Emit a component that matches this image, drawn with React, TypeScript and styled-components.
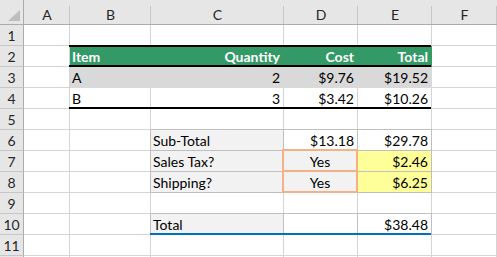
import React from 'react'
import styled, { createGlobalStyle, css } from 'styled-components'

const GlobalStyle = createGlobalStyle`
  *, *::before, *::after {
    box-sizing: border-box;
  }

  html, body {
    margin: 0;
    padding: 0;
    background: #ffffff;
  }
`

// widths include each column's right-hand grid line
const COLUMN_WIDTHS = [24, 46, 81, 133, 74, 74, 65]
const COLUMNS = ['A', 'B', 'C', 'D', 'E', 'F'] as const
const ROW_COUNT = 12
// the last row only peeks in at the bottom edge, so its number isn't drawn
const LABELLED_ROWS = 11

const GRID = '#d4d4d4'
const FRAME = '#bfbfbf'
const HEADER_BG = '#e6e6e6'

type Column = typeof COLUMNS[number]

interface CellSpec {
  text?: string
  fill?: string
  align?: 'left' | 'right' | 'center'
  bold?: boolean
  color?: string
  top?: string
  bottom?: string
  frame?: boolean
  outline?: string
}

const GREEN = '#339966'
const ROW_GRAY = '#d9d9d9'
const LIGHT = '#f2f2f2'
const YELLOW = '#ffff99'
const BLACK = '#000000'
const BLUE = '#0070c0'
const ORANGE = '#f4b183'

const head = (text: string, align: CellSpec['align']): CellSpec => ({
  text, align, bold: true, color: '#ffffff', fill: GREEN, top: BLACK, bottom: BLACK,
})

const cells: Record<number, Partial<Record<Column, CellSpec>>> = {
  2: {
    B: head('Item', 'left'),
    C: head('Quantity', 'right'),
    D: head('Cost', 'right'),
    E: head('Total', 'right'),
  },
  3: {
    B: { text: 'A', fill: ROW_GRAY },
    C: { text: '2', align: 'right', fill: ROW_GRAY },
    D: { text: '$9.76', align: 'right', fill: ROW_GRAY },
    E: { text: '$19.52', align: 'right', fill: ROW_GRAY },
  },
  4: {
    B: { text: 'B', bottom: BLACK },
    C: { text: '3', align: 'right', bottom: BLACK },
    D: { text: '$3.42', align: 'right', bottom: BLACK },
    E: { text: '$10.26', align: 'right', bottom: BLACK },
  },
  6: {
    C: { text: 'Sub-Total', fill: LIGHT, frame: true },
    D: { text: '$13.18', align: 'right', frame: true },
    E: { text: '$29.78', align: 'right', frame: true },
  },
  7: {
    C: { text: 'Sales Tax?', fill: LIGHT, frame: true },
    D: { text: 'Yes', align: 'center', fill: LIGHT, frame: true, outline: ORANGE },
    E: { text: '$2.46', align: 'right', fill: YELLOW, frame: true },
  },
  8: {
    C: { text: 'Shipping?', fill: LIGHT, frame: true },
    D: { text: 'Yes', align: 'center', fill: LIGHT, frame: true, outline: ORANGE },
    E: { text: '$6.25', align: 'right', fill: YELLOW, frame: true },
  },
  10: {
    C: { text: 'Total', fill: LIGHT, frame: true, bottom: BLUE },
    D: { frame: true, bottom: BLUE },
    E: { text: '$38.48', align: 'right', frame: true, bottom: BLUE },
  },
}

const Sheet = styled.div`
  display: grid;
  grid-template-columns: ${COLUMN_WIDTHS.map((w) => `${w}px`).join(' ')};
  grid-template-rows: 25px repeat(${ROW_COUNT}, 21px);
  width: 497px;
  height: 257px;
  overflow: hidden;
  font-family: Lato, 'Liberation Sans', sans-serif;
  font-size: 14px;
  line-height: 20px;
  color: #000000;
`

const Corner = styled.div`
  background: ${HEADER_BG};
  border-right: 1px solid #ababab;
  border-bottom: 1px solid #ababab;
`

const ColumnHeader = styled.div`
  position: relative;
  display: flex;
  justify-content: center;
  padding-top: 5px;
  background: ${HEADER_BG};
  border-bottom: 1px solid #ababab;
  color: #262626;

  &::after {
    content: '';
    position: absolute;
    top: 6px;
    right: 0;
    bottom: 0;
    width: 1px;
    background: #c6c6c6;
  }
`

const RowHeader = styled.div`
  display: flex;
  justify-content: center;
  padding-top: 1px;
  background: ${HEADER_BG};
  border-right: 1px solid #ababab;
  border-bottom: 1px solid #c6c6c6;
  color: #262626;
`

const edge = (color: string | undefined, side: 'top' | 'bottom') =>
  color &&
  css`
    &::${side === 'top' ? 'before' : 'after'} {
      content: '';
      position: absolute;
      left: -1px;
      right: 0;
      ${side}: -1px;
      height: 2px;
      background: ${color};
      z-index: 1;
    }
  `

const Cell = styled.div<{
  $fill?: string
  $align?: CellSpec['align']
  $bold?: boolean
  $color?: string
  $top?: string
  $bottom?: string
  $frame?: boolean
}>`
  position: relative;
  display: flex;
  align-items: flex-start;
  justify-content: ${({ $align }) =>
    $align === 'right' ? 'flex-end' : $align === 'center' ? 'center' : 'flex-start'};
  padding: 1px 3px 0 2px;
  white-space: nowrap;
  background: ${({ $fill }) => $fill ?? '#ffffff'};
  color: ${({ $color }) => $color ?? '#000000'};
  font-weight: ${({ $bold }) => ($bold ? 700 : 400)};
  border-right: 1px solid ${({ $fill, $frame }) => ($frame ? FRAME : $fill ?? GRID)};
  border-bottom: 1px solid ${({ $fill, $frame }) => ($frame ? FRAME : $fill ?? GRID)};
  ${({ $frame }) =>
    $frame &&
    css`
      box-shadow: -1px 0 0 ${FRAME}, 0 -1px 0 ${FRAME};
    `}
  ${({ $top }) => edge($top, 'top')}
  ${({ $bottom }) => edge($bottom, 'bottom')}
`

const Outline = styled.span<{ $color: string }>`
  position: absolute;
  top: -2px;
  left: -2px;
  right: -1px;
  bottom: -1px;
  border: 2px solid ${({ $color }) => $color};
  z-index: 2;
  pointer-events: none;
`

const SelectAll = () => (
  <svg width="23" height="24" viewBox="0 0 23 24">
    <polygon points="20,10 20,21 8,21" fill="#bdbdbd" />
  </svg>
)

export default function App() {
  const rows = Array.from({ length: ROW_COUNT }, (_, i) => i + 1)

  return (
    <>
      <GlobalStyle />
      <Sheet>
        <Corner>
          <SelectAll />
        </Corner>
        {COLUMNS.map((col) => (
          <ColumnHeader key={col}>{col}</ColumnHeader>
        ))}
        {rows.map((row) => (
          <React.Fragment key={row}>
            <RowHeader>{row <= LABELLED_ROWS ? row : null}</RowHeader>
            {COLUMNS.map((col) => {
              const spec = cells[row]?.[col] ?? {}
              return (
                <Cell
                  key={col}
                  $fill={spec.fill}
                  $align={spec.align}
                  $bold={spec.bold}
                  $color={spec.color}
                  $top={spec.top}
                  $bottom={spec.bottom}
                  $frame={spec.frame}
                >
                  {spec.text}
                  {spec.outline && <Outline $color={spec.outline} />}
                </Cell>
              )
            })}
          </React.Fragment>
        ))}
      </Sheet>
    </>
  )
}
